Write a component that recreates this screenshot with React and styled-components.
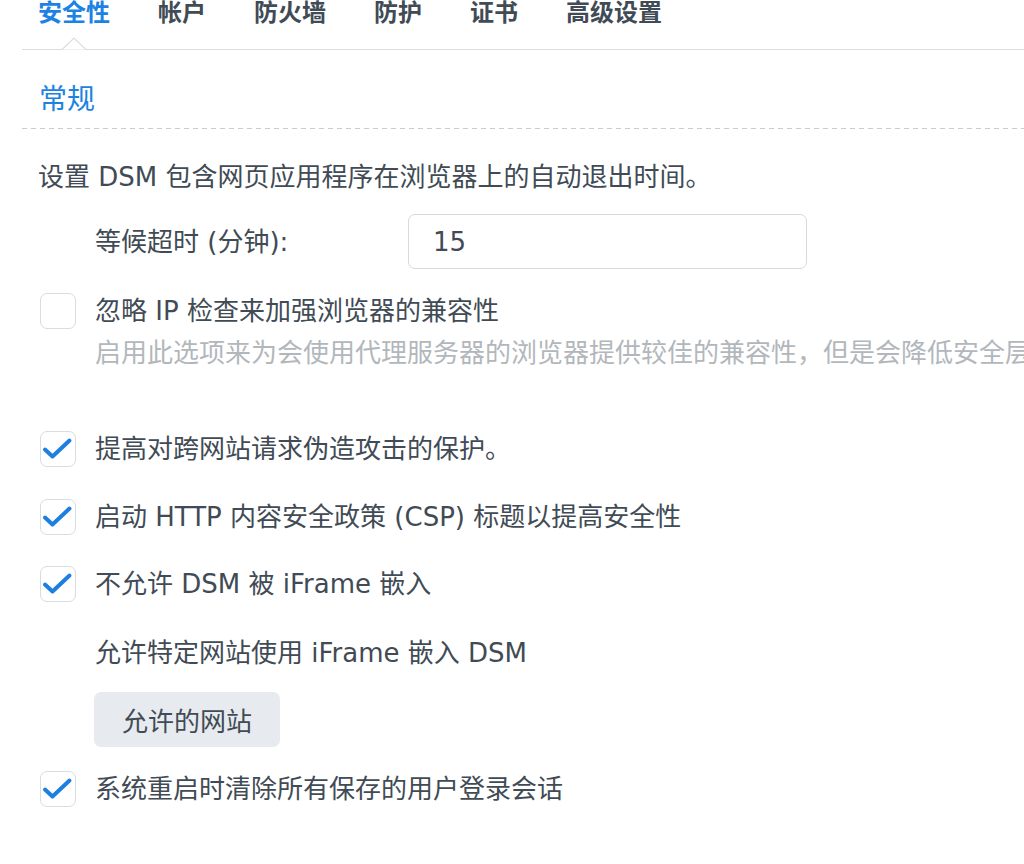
import React from 'react';
import styled, { createGlobalStyle } from 'styled-components';

const GlobalStyle = createGlobalStyle`
  body {
    margin: 0;
    background: #ffffff;
    overflow: hidden;
    font-family: "DejaVu Sans", "Noto Sans CJK SC", sans-serif;
    color: #414b55;
  }
`;

const Page = styled.div`
  width: 1024px;
  height: 864px;
  overflow: hidden;
`;

const TabBar = styled.div`
  display: flex;
  gap: 48px;
  height: 49px;
  margin-left: 22px;
  padding-left: 16px;
  border-bottom: 1px solid #d9dde2;
`;

const Tab = styled.div`
  position: relative;
  font-size: 24px;
  line-height: 26px;
  font-weight: 700;
  color: ${(p) => (p.$active ? '#1d83e2' : '#414b55')};
`;

const Caret = styled.svg`
  position: absolute;
  left: 50%;
  bottom: -1px;
  margin-left: -12px;
`;

const Section = styled.div`
  margin-left: 22px;
`;

const SectionTitle = styled.h2`
  margin: 0;
  padding: 30px 0 9px 17px;
  font-size: 28px;
  line-height: 40px;
  font-weight: 400;
  color: #1d83e2;
  background-image: repeating-linear-gradient(
    to right,
    #c9cdd2 0 5px,
    transparent 5px 9px
  );
  background-size: 100% 1px;
  background-repeat: no-repeat;
  background-position: left bottom;
`;

const Content = styled.div`
  padding-left: 16px;
  display: flex;
  flex-direction: column;
`;

const Text = styled.div`
  margin-top: ${(p) => p.$top}px;
  padding-left: ${(p) => (p.$indent ? 57 : 0)}px;
  font-size: 26px;
  line-height: 34px;
  white-space: nowrap;
  color: ${(p) => (p.$muted ? '#b2b7bc' : '#414b55')};
`;

const FieldRow = styled.div`
  display: flex;
  align-items: center;
  margin-top: ${(p) => p.$top}px;
  padding-left: 57px;
`;

const FieldLabel = styled.label`
  width: 313px;
  font-size: 26px;
  line-height: 34px;
`;

const TextInput = styled.input`
  box-sizing: border-box;
  width: 399px;
  height: 55px;
  padding: 0 24px;
  border: 1px solid #d6dadf;
  border-radius: 7px;
  font-family: inherit;
  font-size: 26px;
  color: #414b55;
  outline: none;
`;

const CheckRow = styled.label`
  display: flex;
  align-items: center;
  gap: 19px;
  margin-top: ${(p) => p.$top}px;
  padding-left: 2px;
  font-size: 26px;
  line-height: 36px;
  white-space: nowrap;
`;

const Box = styled.span`
  box-sizing: border-box;
  display: flex;
  width: 36px;
  height: 36px;
  border: 1.5px solid #d9dce0;
  border-radius: 7px;
  background: #fff;
  flex-shrink: 0;
`;

const Button = styled.button`
  box-sizing: border-box;
  align-self: flex-start;
  margin-top: ${(p) => p.$top}px;
  margin-left: 56px;
  width: 186px;
  height: 55px;
  border: none;
  border-radius: 7px;
  background: #e7ebef;
  font-family: inherit;
  font-size: 26px;
  color: #414b55;
`;

const Checkbox = ({ checked, label, top }) => (
  <CheckRow $top={top}>
    <Box>
      {checked && (
        <svg width="33" height="33" viewBox="0 0 33 33">
          <polyline
            points="4,17.5 11.5,24.5 28.5,8.5"
            fill="none"
            stroke="#1d7fe0"
            strokeWidth="4"
            strokeLinecap="round"
            strokeLinejoin="round"
          />
        </svg>
      )}
    </Box>
    {label}
  </CheckRow>
);

const tabs = ['安全性', '帐户', '防火墙', '防护', '证书', '高级设置'];

export default function App() {
  return (
    <Page>
      <GlobalStyle />
      <TabBar>
        {tabs.map((t, i) => (
          <Tab key={t} $active={i === 0}>
            {t}
            {i === 0 && (
              <Caret width="24" height="13" viewBox="0 0 24 13">
                <polyline
                  points="0,12.5 12,1 24,12.5"
                  fill="#fff"
                  stroke="#d9dde2"
                  strokeWidth="1.2"
                />
              </Caret>
            )}
          </Tab>
        ))}
      </TabBar>
      <Section>
        <SectionTitle>常规</SectionTitle>
        <Content>
          <Text $top={31}>设置 DSM 包含网页应用程序在浏览器上的自动退出时间。</Text>
          <FieldRow $top={20}>
            <FieldLabel>等候超时 (分钟):</FieldLabel>
            <TextInput defaultValue="15" />
          </FieldRow>
          <Checkbox top={24} label="忽略 IP 检查来加强浏览器的兼容性" />
          <Text $top={7} $indent $muted>
            启用此选项来为会使用代理服务器的浏览器提供较佳的兼容性，但是会降低安全层级。
          </Text>
          <Checkbox checked top={61} label="提高对跨网站请求伪造攻击的保护。" />
          <Checkbox checked top={32} label="启动 HTTP 内容安全政策 (CSP) 标题以提高安全性" />
          <Checkbox checked top={31} label="不允许 DSM 被 iFrame 嵌入" />
          <Text $top={34} $indent>允许特定网站使用 iFrame 嵌入 DSM</Text>
          <Button $top={22}>允许的网站</Button>
          <Checkbox checked top={24} label="系统重启时清除所有保存的用户登录会话" />
        </Content>
      </Section>
    </Page>
  );
}
